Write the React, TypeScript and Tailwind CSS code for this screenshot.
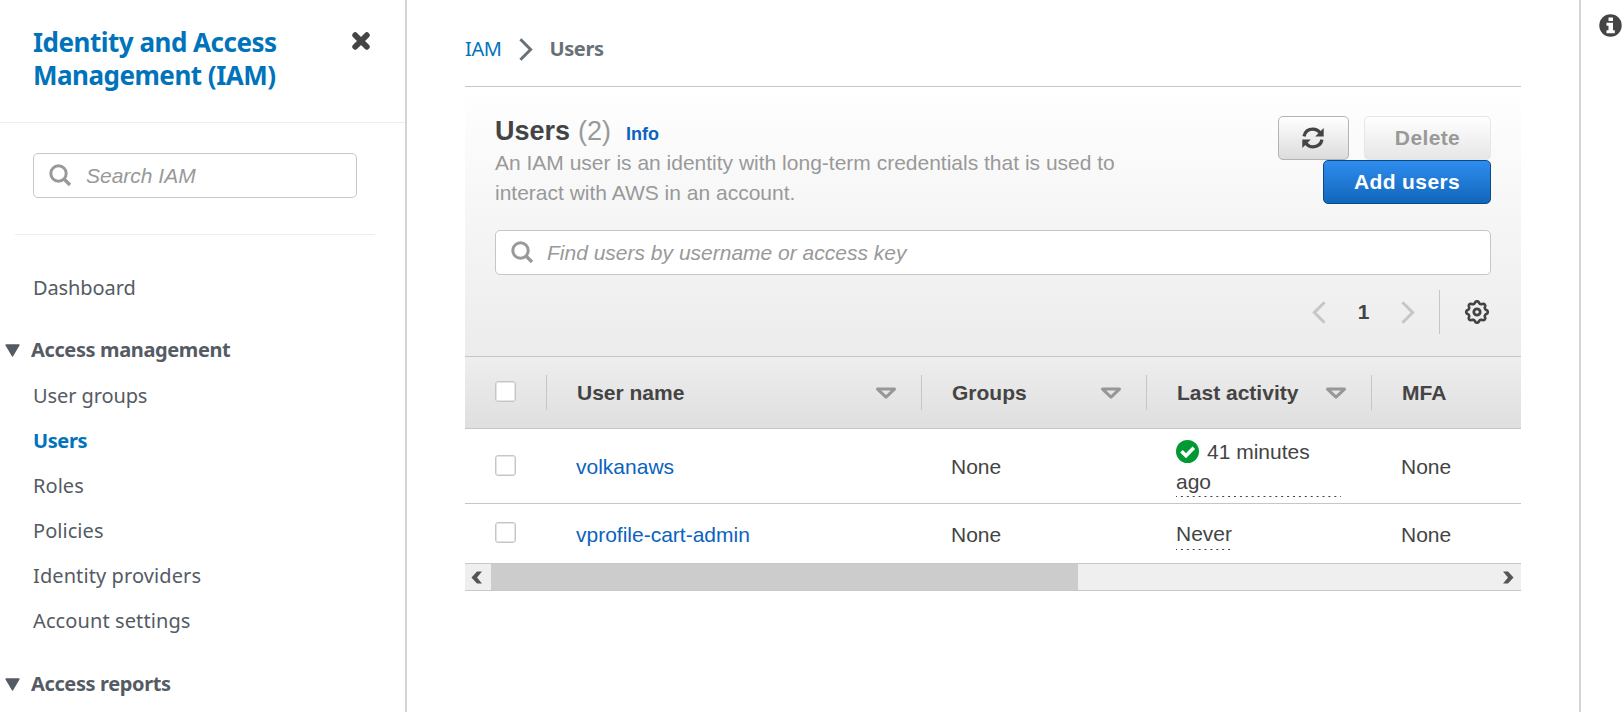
import React from "react";

const ember = "font-['Noto_Sans',sans-serif]";

function SearchIcon() {
  return (
    <svg width="23" height="23" viewBox="0 0 23 23" fill="none" stroke="#999" strokeWidth="3" className="shrink-0">
      <circle cx="9.5" cy="9.5" r="7.7" />
      <path d="M15 15l6 6" strokeWidth="3.4" />
    </svg>
  );
}

function Chevron({ left, color, width = 3 }: { left?: boolean; color: string; width?: number }) {
  return (
    <svg width="14" height="23" viewBox="0 0 14 23" fill="none" stroke={color} strokeWidth={width} className="shrink-0">
      <path d={left ? "M12.6 1.2L2.4 11.5L12.6 21.8" : "M1.4 1.2L11.6 11.5L1.4 21.8"} />
    </svg>
  );
}

// Outline of a cog with eight rounded teeth, sampled around the circle.
const gearPath =
  Array.from({ length: 96 }, (_, i) => {
    const a = (i / 96) * Math.PI * 2;
    const c = Math.cos(8 * a);
    const r = 9.7 + 1.05 * Math.sign(c) * Math.sqrt(Math.abs(c));
    return `${i ? "L" : "M"}${(r * Math.cos(a)).toFixed(2)} ${(r * Math.sin(a)).toFixed(2)}`;
  }).join("") + "Z";

function GearIcon() {
  return (
    <svg width="26" height="26" viewBox="-13 -13 26 26" className="ml-[24px] mr-px" fill="none" stroke="#444">
      <path d={gearPath} strokeWidth="2.6" strokeLinejoin="round" />
      <circle r="3.2" strokeWidth="2.8" />
    </svg>
  );
}

function Checkbox() {
  return <span className="block size-[21px] shrink-0 rounded-[3px] border border-[#c6c6c6] bg-white shadow-[inset_0_0_0_1px_#e4e4e4]" />;
}

function Caret() {
  return (
    <svg width="15" height="13" viewBox="0 0 15 13" className="shrink-0">
      <path d="M1 1h13L7.5 12z" fill="#545b64" stroke="#545b64" strokeWidth="1.4" strokeLinejoin="round" />
    </svg>
  );
}

function Section({ label }: { label: string }) {
  return (
    <div className="flex h-[30px] items-center pl-[4.5px]">
      <Caret />
      <span className="ml-[11.5px] text-[20px] font-bold leading-[30px] tracking-[-0.38px]">{label}</span>
    </div>
  );
}

function NavItem({ label, active, tracking = "" }: { label: string; active?: boolean; tracking?: string }) {
  return (
    <li className="h-[45px] pl-[33px]">
      <a className={active ? "text-[20px] font-bold leading-[30px] tracking-[-0.4px] text-[#0073bb]" : `text-[20px] leading-[30px] ${tracking}`}>{label}</a>
    </li>
  );
}

function HeadCell({ label, sortable }: { label: string; sortable?: boolean }) {
  return (
    <div className="flex h-[35px] items-center border-l border-[#c6c6c6] pl-[30px] pr-[24px] font-bold">
      <span className="grow leading-[30px]">{label}</span>
      {sortable && (
        <svg width="22" height="13" viewBox="0 0 22 13" className="mt-px shrink-0">
          <path d="M2.500 2.100h17L11 10.200z" fill="none" stroke="#979797" strokeWidth="3" strokeLinejoin="round" />
        </svg>
      )}
    </div>
  );
}

function Dots() {
  return (
    <svg width="100%" height="1" className="block">
      <line x1="0" y1="0.5" x2="100%" y2="0.5" stroke="#444" strokeWidth="1" strokeDasharray="2 3.9" strokeDashoffset="1" />
    </svg>
  );
}

const cols = "grid grid-cols-[81px_375px_225px_225px_150px]";

export default function App() {
  return (
    <div className="flex h-[712px] w-[1624px] overflow-hidden bg-white font-['Liberation_Sans',Arial,sans-serif] text-[21px] leading-[30px] text-[#444]">
      <aside className={`${ember} w-[407px] shrink-0 border-r-2 border-[#d0d6d8] text-[#545b64]`}>
        <div className="flex h-[123px] items-start justify-between border-b border-[#eaeded] pl-[33px] pr-[35px] pt-[26px]">
          <h2 className="w-[270px] text-[26px] font-bold leading-[33px] tracking-[-0.5px] text-[#0073bb]">
            Identity and Access Management (IAM)
          </h2>
          <svg width="18" height="18" viewBox="0 0 18 18" className="mt-[6px]">
            <path d="M3.200 3.200l11.600 11.600M14.800 3.200L3.200 14.800" stroke="#444" strokeWidth="5.800" strokeLinecap="round" />
          </svg>
        </div>
        <div className="ml-[33px] mt-[30px] flex h-[45px] w-[324px] items-center rounded-[5px] border border-[#c6c6c6] pl-[15px] font-['Liberation_Sans',Arial,sans-serif] text-[21px] italic text-[#999]">
          <SearchIcon />
          <span className="ml-[14px]">Search IAM</span>
        </div>
        <hr className="ml-[15px] mt-[36px] w-[360px] border-[#eaeded]" />
        <ul className="mt-[37px]">
          <NavItem label="Dashboard" tracking="tracking-[-0.1px]" />
        </ul>
        <div className="mt-[18px]">
          <Section label="Access management" />
        </div>
        <ul className="mt-[15px]">
          <NavItem label="User groups" tracking="tracking-[-0.1px]" />
          <NavItem label="Users" active />
          <NavItem label="Roles" tracking="tracking-[0.05px]" />
          <NavItem label="Policies" tracking="tracking-[0.05px]" />
          <NavItem label="Identity providers" tracking="tracking-[0.1px]" />
          <NavItem label="Account settings" tracking="tracking-[0.1px]" />
        </ul>
        <div className="mt-[19px]">
          <Section label="Access reports" />
        </div>
      </aside>

      <main className="w-[1172px] shrink-0 pl-[58px]">
        <nav className={`${ember} flex h-[86px] items-center pt-[12px] text-[20px]`}>
          <a className="tracking-[-0.4px] text-[#0073bb]">IAM</a>
          <span className="ml-[17px]"><Chevron color="#687078" /></span>
          <span className="ml-[17px] font-bold tracking-[-0.4px] text-[#687078]">Users</span>
        </nav>

        <section className="w-[1056px]">
          <div className="h-[270px] border-t border-[#c6c6c6] bg-linear-to-b from-white to-[#ececec] px-[30px] pt-[29px]">
            <div className="flex h-[92px] items-start justify-between">
              <div className="w-[640px] text-[#999]">
                <h1 className="mt-[-1px] mb-px flex h-[32px] items-baseline text-[27px] leading-[32px]">
                  <span className="font-bold text-[#444]">Users</span>
                  <span className="ml-[8px]">(2)</span>
                  <a className="ml-[15px] text-[18px] font-bold text-[#0a63be]">Info</a>
                </h1>
                <p>An IAM user is an identity with long-term credentials that is used to interact with AWS in an account.</p>
              </div>
              <div className="flex w-[220px] flex-wrap justify-end gap-x-[15px] font-bold tracking-[0.38px]">
                <button className="flex h-[44px] w-[71px] items-center justify-center rounded-[5px] border border-[#b3b3b3] bg-linear-to-b from-white to-[#dcdcdc] pr-px">
                  <svg width="22" height="22" viewBox="0 0 22 22">
                    <g fill="none" stroke="#444" strokeWidth="3.3">
                      <path d="M2 9.3C3 4.8 6.500 2.200 11 2.200c3 0 5.200 1.200 7 3.300" />
                      <path d="M20 12.700C19 17.200 15.500 19.800 11 19.800c-3 0-5.200-1.200-7-3.300" />
                    </g>
                    <path d="M21.700 1v8.400h-8.500zM.3 21v-8.400h8.500z" fill="#444" />
                  </svg>
                </button>
                <button className="h-[44px] w-[127px] rounded-[5px] border border-[#e6e6e6] bg-linear-to-b from-white to-[#e6e6e6] text-[#999]">Delete</button>
                <button className="h-[44px] w-[168px] rounded-[5px] border border-[#0b4a87] bg-linear-to-b from-[#2e8def] to-[#1166bb] text-white">Add users</button>
              </div>
            </div>
            <div className="mt-[22px] flex h-[45px] items-center rounded-[5px] border border-[#c6c6c6] bg-white pl-[15px] italic text-[#999]">
              <SearchIcon />
              <span className="ml-[13px]">Find users by username or access key</span>
            </div>
            <div className="mt-[15px] flex h-[44px] items-center justify-end">
              <Chevron left color="#c6c6c6" />
              <span className="w-[75px] text-center font-bold">1</span>
              <Chevron color="#c6c6c6" />
              <span className="ml-[24px] h-[44px] w-px bg-[#c6c6c6]" />
              <GearIcon />
            </div>
          </div>

          <div className="overflow-hidden">
            <div className={`${cols} h-[73px] items-start border-y border-[#c6c6c6] bg-linear-to-b from-[#eee] to-[#dfdfdf] pt-[18px]`}>
              <div className="pl-[30px] pt-[6px]"><Checkbox /></div>
              <HeadCell label="User name" sortable />
              <HeadCell label="Groups" sortable />
              <HeadCell label="Last activity" sortable />
              <HeadCell label="MFA" />
            </div>
            <div className={`${cols} h-[75px] border-b border-[#c6c6c6]`}>
              <div className="pl-[30px] pt-[26px]"><Checkbox /></div>
              <a className="pl-[30px] pt-[23px] text-[#0a63be]">volkanaws</a>
              <span className="pl-[30px] pt-[23px]">None</span>
              <div className="pl-[30px] pr-[30px] pt-[8px]">
                <div className="h-[59px]">
                  <svg width="23" height="23" viewBox="0 0 23 23" className="mr-[8px] inline-block align-[-4px]">
                    <circle cx="11.500" cy="11.500" r="11.500" fill="#093" />
                    <path d="M5.500 11.300l4.500 4.500 7.800-8" fill="none" stroke="#fff" strokeWidth="3.600" />
                  </svg>
                  41 minutes ago
                </div>
                <Dots />
              </div>
              <span className="pl-[30px] pt-[23px]">None</span>
            </div>
            <div className={`${cols} h-[59px]`}>
              <div className="pl-[30px] pt-[18px]"><Checkbox /></div>
              <a className="pl-[30px] pt-[16px] text-[#0a63be]">vprofile-cart-admin</a>
              <span className="pl-[30px] pt-[16px]">None</span>
              <div className="pl-[30px] pt-[15px]">
                <div className="w-[56px]">
                  Never
                  <Dots />
                </div>
              </div>
              <span className="pl-[30px] pt-[16px]">None</span>
            </div>
          </div>

          <div className="flex h-[28px] items-center border-y border-[#c8c8c8] bg-[#efefef]">
            <span className="flex w-[26px] justify-center pr-[2px]">
              <svg width="12" height="13" viewBox="0 0 12 13"><path d="M6 0.500h5L6 6.500l5 6H6L.5 6.500z" fill="#555" /></svg>
            </span>
            <span className="h-full w-[587px] bg-[#ccc]" />
            <span className="ml-auto flex w-[26px] justify-center">
              <svg width="12" height="13" viewBox="0 0 12 13"><path d="M6 0.500H1l5 6-5 6h5l5.500-6z" fill="#555" /></svg>
            </span>
          </div>
        </section>
      </main>

      <aside className="grow border-l-2 border-[#d0d6d8] pl-[18px] pt-[14px]">
        <svg width="23" height="23" viewBox="0 0 23 23">
          <circle cx="11.500" cy="11.500" r="11.200" fill="#444" />
          <path d="M9.500 3.500h4.500v3.500H9.500zM7.500 8.800H14v7.400h1.800v3H7.500v-3h2v-4.400h-2z" fill="#fff" />
        </svg>
      </aside>
    </div>
  );
}
